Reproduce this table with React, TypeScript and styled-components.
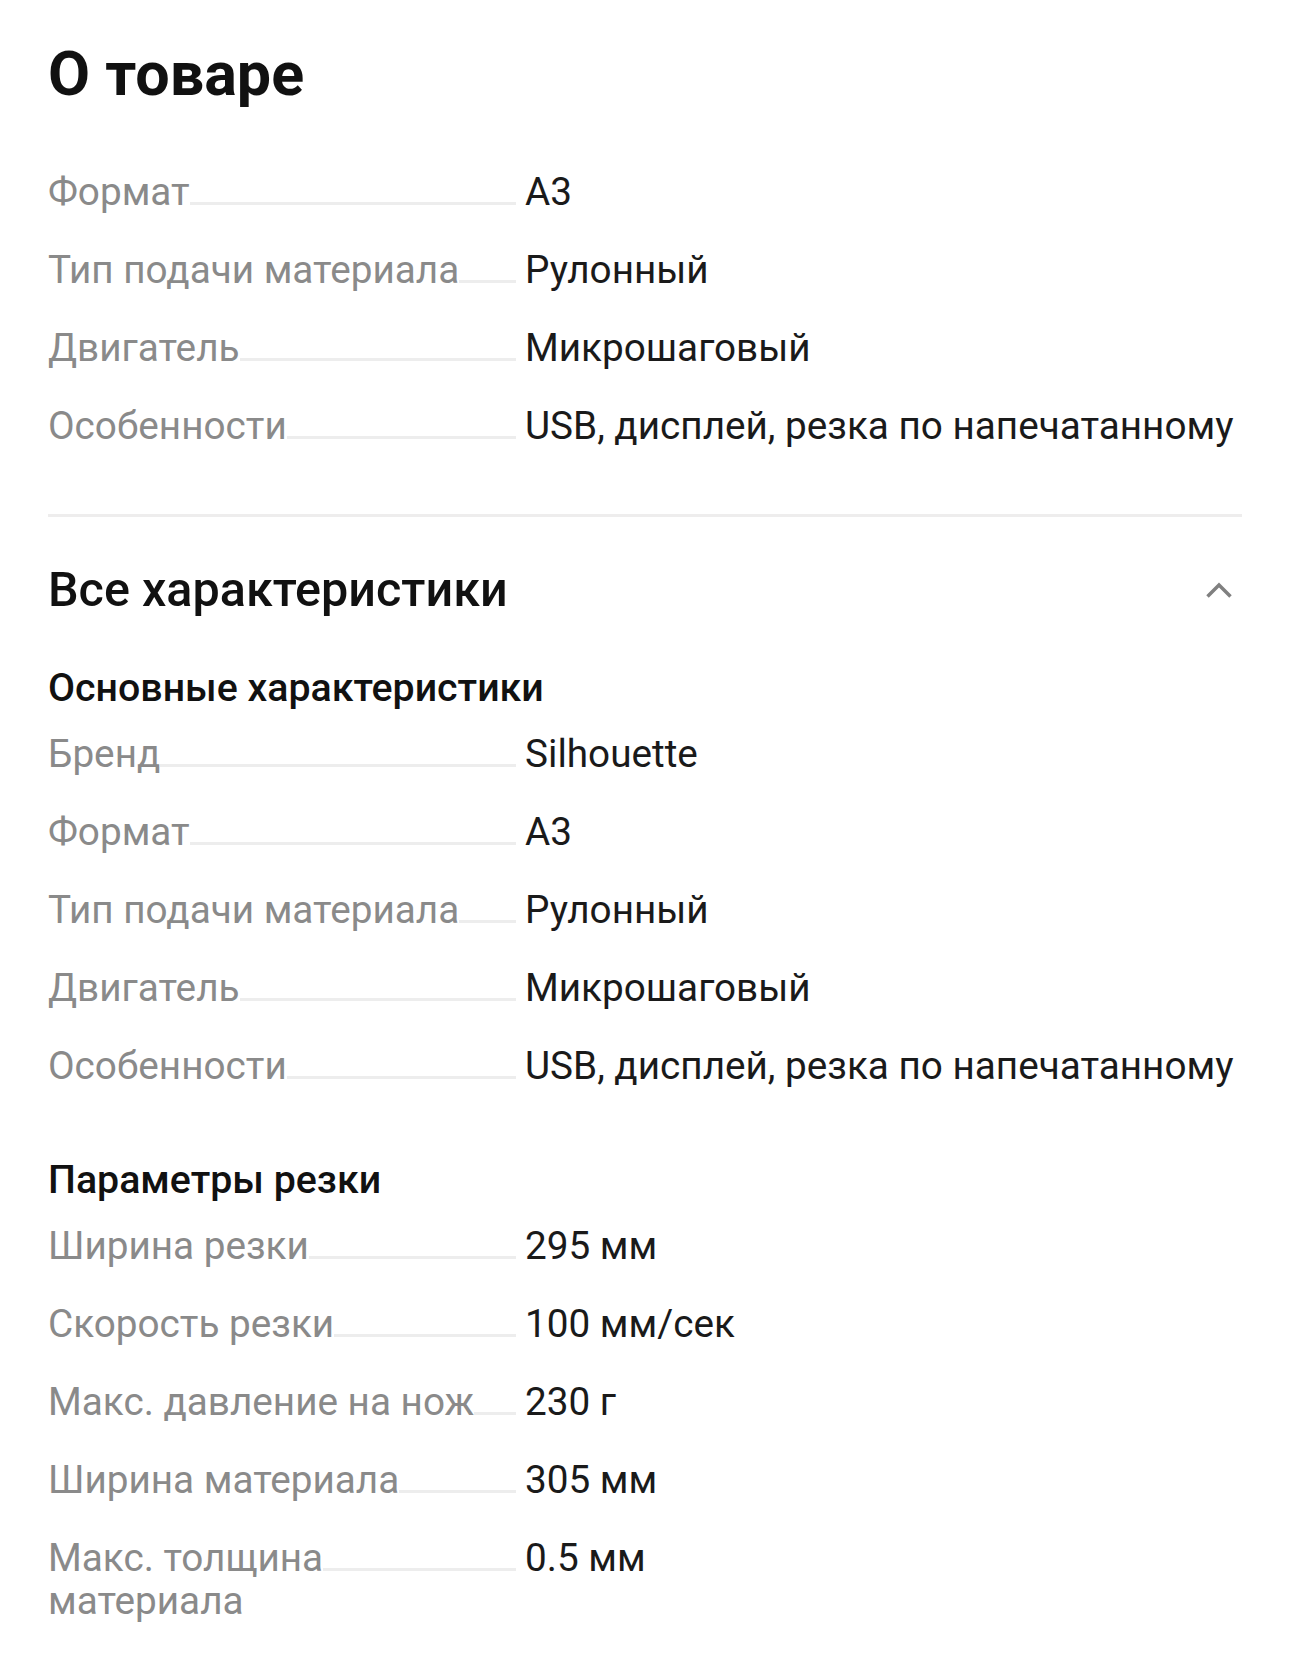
import React from 'react'
import styled, { createGlobalStyle } from 'styled-components'

type Spec = {
  label: string
  value: string
}

const about: Spec[] = [
  { label: 'Формат', value: 'А3' },
  { label: 'Тип подачи материала', value: 'Рулонный' },
  { label: 'Двигатель', value: 'Микрошаговый' },
  { label: 'Особенности', value: 'USB, дисплей, резка по напечатанному' },
]

// label text breaks where the site breaks it
const groups: { title: string; items: Spec[] }[] = [
  {
    title: 'Основные характеристики',
    items: [
      { label: 'Бренд', value: 'Silhouette' },
      { label: 'Формат', value: 'А3' },
      { label: 'Тип подачи материала', value: 'Рулонный' },
      { label: 'Двигатель', value: 'Микрошаговый' },
      { label: 'Особенности', value: 'USB, дисплей, резка по напечатанному' },
    ],
  },
  {
    title: 'Параметры резки',
    items: [
      { label: 'Ширина резки', value: '295 мм' },
      { label: 'Скорость резки', value: '100 мм/сек' },
      { label: 'Макс. давление на нож', value: '230 г' },
      { label: 'Ширина материала', value: '305 мм' },
      { label: 'Макс. толщина\nматериала', value: '0.5 мм' },
    ],
  },
]

const SpecList: React.FC<{ items: Spec[] }> = ({ items }) => (
  <List>
    {items.map((item, i) => (
      <Row key={i}>
        <LabelCell>
          <LabelText>{item.label}</LabelText>
          <Leader />
        </LabelCell>
        <Value>{item.value}</Value>
      </Row>
    ))}
  </List>
)

const App: React.FC = () => {
  return (
    <Page>
      <GlobalStyle />
      <Title>О товаре</Title>
      <SpecList items={about} />
      <Divider />
      <SectionHead>
        <SectionTitle>Все характеристики</SectionTitle>
        <Chevron width="28" height="18" viewBox="0 0 28 18" fill="none">
          <path d="M2.5 15.5L14 4L25.5 15.5" stroke="#808080" strokeWidth="3.5" />
        </Chevron>
      </SectionHead>
      {groups.map((g) => (
        <Group key={g.title}>
          <GroupTitle>{g.title}</GroupTitle>
          <SpecList items={g.items} />
        </Group>
      ))}
    </Page>
  )
}

const GlobalStyle = createGlobalStyle`
  body {
    margin: 0;
    background: #fff;
    font-family: Roboto, 'Noto Sans', sans-serif;
    color: #1a1a1a;
  }
`

const Page = styled.div`
  width: 1290px;
  box-sizing: border-box;
  padding: 39px 48px 60px;
`

const Title = styled.h1`
  margin: 0;
  font-size: 61px;
  line-height: 70px;
  font-weight: 700;
  color: #111;
`

const List = styled.div`
  display: flex;
  flex-direction: column;
  gap: 35px;
  margin-top: 61px;
`

const Row = styled.div`
  display: grid;
  grid-template-columns: 468px 1fr;
  column-gap: 9px;
  font-size: 38.7px;
  line-height: 43px;
`

const LabelCell = styled.div`
  display: flex;
  align-items: baseline;
`

const LabelText = styled.span`
  color: #8a8a8a;
  flex: 0 1 auto;
  white-space: pre-line;
`

const Leader = styled.span`
  flex: 1 0 40px;
  height: 0;
  border-bottom: 3px solid #ededed;
  margin-bottom: -1px;
`

const Value = styled.span`
  color: #1a1a1a;
`

const Divider = styled.hr`
  margin: 67px 0 0;
  border: none;
  height: 3px;
  background: #eeeded;
`

const SectionHead = styled.div`
  display: flex;
  align-items: center;
  justify-content: space-between;
  margin-top: 45px;
`

const SectionTitle = styled.h2`
  margin: 0;
  font-size: 48.5px;
  line-height: 56px;
  font-weight: 500;
  color: #111;
`

const Chevron = styled.svg`
  margin-right: 9px;
`

const Group = styled.section`
  margin-top: 47px;

  & + & {
    margin-top: 70px;
  }

  ${List} {
    margin-top: 21px;
  }
`

const GroupTitle = styled.h3`
  margin: 0;
  font-size: 39.3px;
  line-height: 46px;
  font-weight: 500;
  color: #111;
`

export default App
